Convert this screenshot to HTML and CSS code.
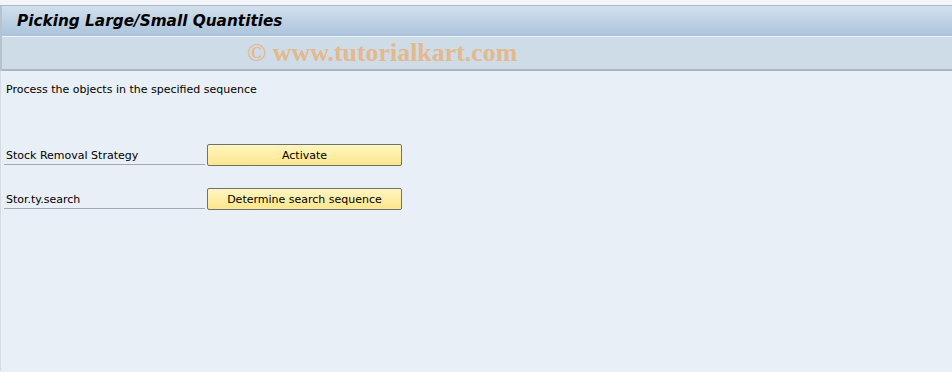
FILE: index.html
```html
<!DOCTYPE html>
<html>
<head>
<meta charset="utf-8">
<link rel="stylesheet" href="styles.css">
</head>
<body>
<div class="top-strip"></div>
<div class="header">
  <div class="title-bar"><span class="title">Picking Large/Small Quantities</span></div>
  <div class="toolbar"><span class="watermark">© www.tutorialkart.com</span></div>
</div>
<div class="content">
  <p class="intro">Process the objects in the specified sequence</p>
  <div class="rows">
    <div class="row">
      <span class="label">Stock Removal Strategy</span>
      <button class="btn">Activate</button>
    </div>
    <div class="row">
      <span class="label">Stor.ty.search</span>
      <button class="btn">Determine search sequence</button>
    </div>
  </div>
</div>
</body>
</html>
```

FILE: styles.css
```css
html, body {
  margin: 0;
  padding: 0;
  width: 952px;
  height: 372px;
  overflow: hidden;
  background: #e8eff6;
  font-family: Tahoma, "DejaVu Sans", sans-serif;
}
.top-strip {
  height: 5px;
  background: #f2f4f8;
  border-bottom: 1px solid #a9b8cb;
}
.header {
  border-left: 2px solid #b6c2cf;
}
.title-bar {
  height: 30px;
  background: linear-gradient(#d2e0ec, #abc3db);
  border-bottom: 1px solid #f0f4f8;
  display: flex;
  align-items: center;
  padding-left: 15px;
}
.title {
  font-family: Tahoma, "DejaVu Sans", sans-serif;
  font-weight: bold;
  font-style: italic;
  font-size: 15.3px;
  color: #000;
}
.toolbar {
  height: 32px;
  background: #cedce7;
  border-bottom: 2px solid #a7b6c7;
  display: flex;
  align-items: center;
  padding-left: 245px;
}
.watermark {
  font-family: "Liberation Serif", serif;
  font-weight: bold;
  font-size: 25.9px;
  color: #e9b37d;
  opacity: 0.85;
}
.content {
  padding: 0 0 0 3px;
  border-left: 1px solid #d4dbe4;
  height: 300px;
  font-size: 11px;
  color: #000;
}
.intro {
  margin: 0;
  padding: 12px 0 0 2px;
  height: 50px;
}
.rows {
  display: flex;
  flex-direction: column;
  gap: 22px;
  padding-top: 11px;
}
.row {
  display: flex;
  align-items: flex-end;
  height: 22px;
}
.label {
  width: 199px;
  padding-left: 2px;
  border-bottom: 1px solid #a4a9ad;
  height: 15px;
  margin-bottom: 1px;
}
.btn {
  margin-left: 2px;
  width: 195px;
  height: 22px;
  border: 1px solid #6f7071;
  border-radius: 2px;
  background: linear-gradient(#fff5c0, #fde68c);
  font-family: Tahoma, "DejaVu Sans", sans-serif;
  font-size: 11px;
  color: #000;
  padding: 0;
}
```
